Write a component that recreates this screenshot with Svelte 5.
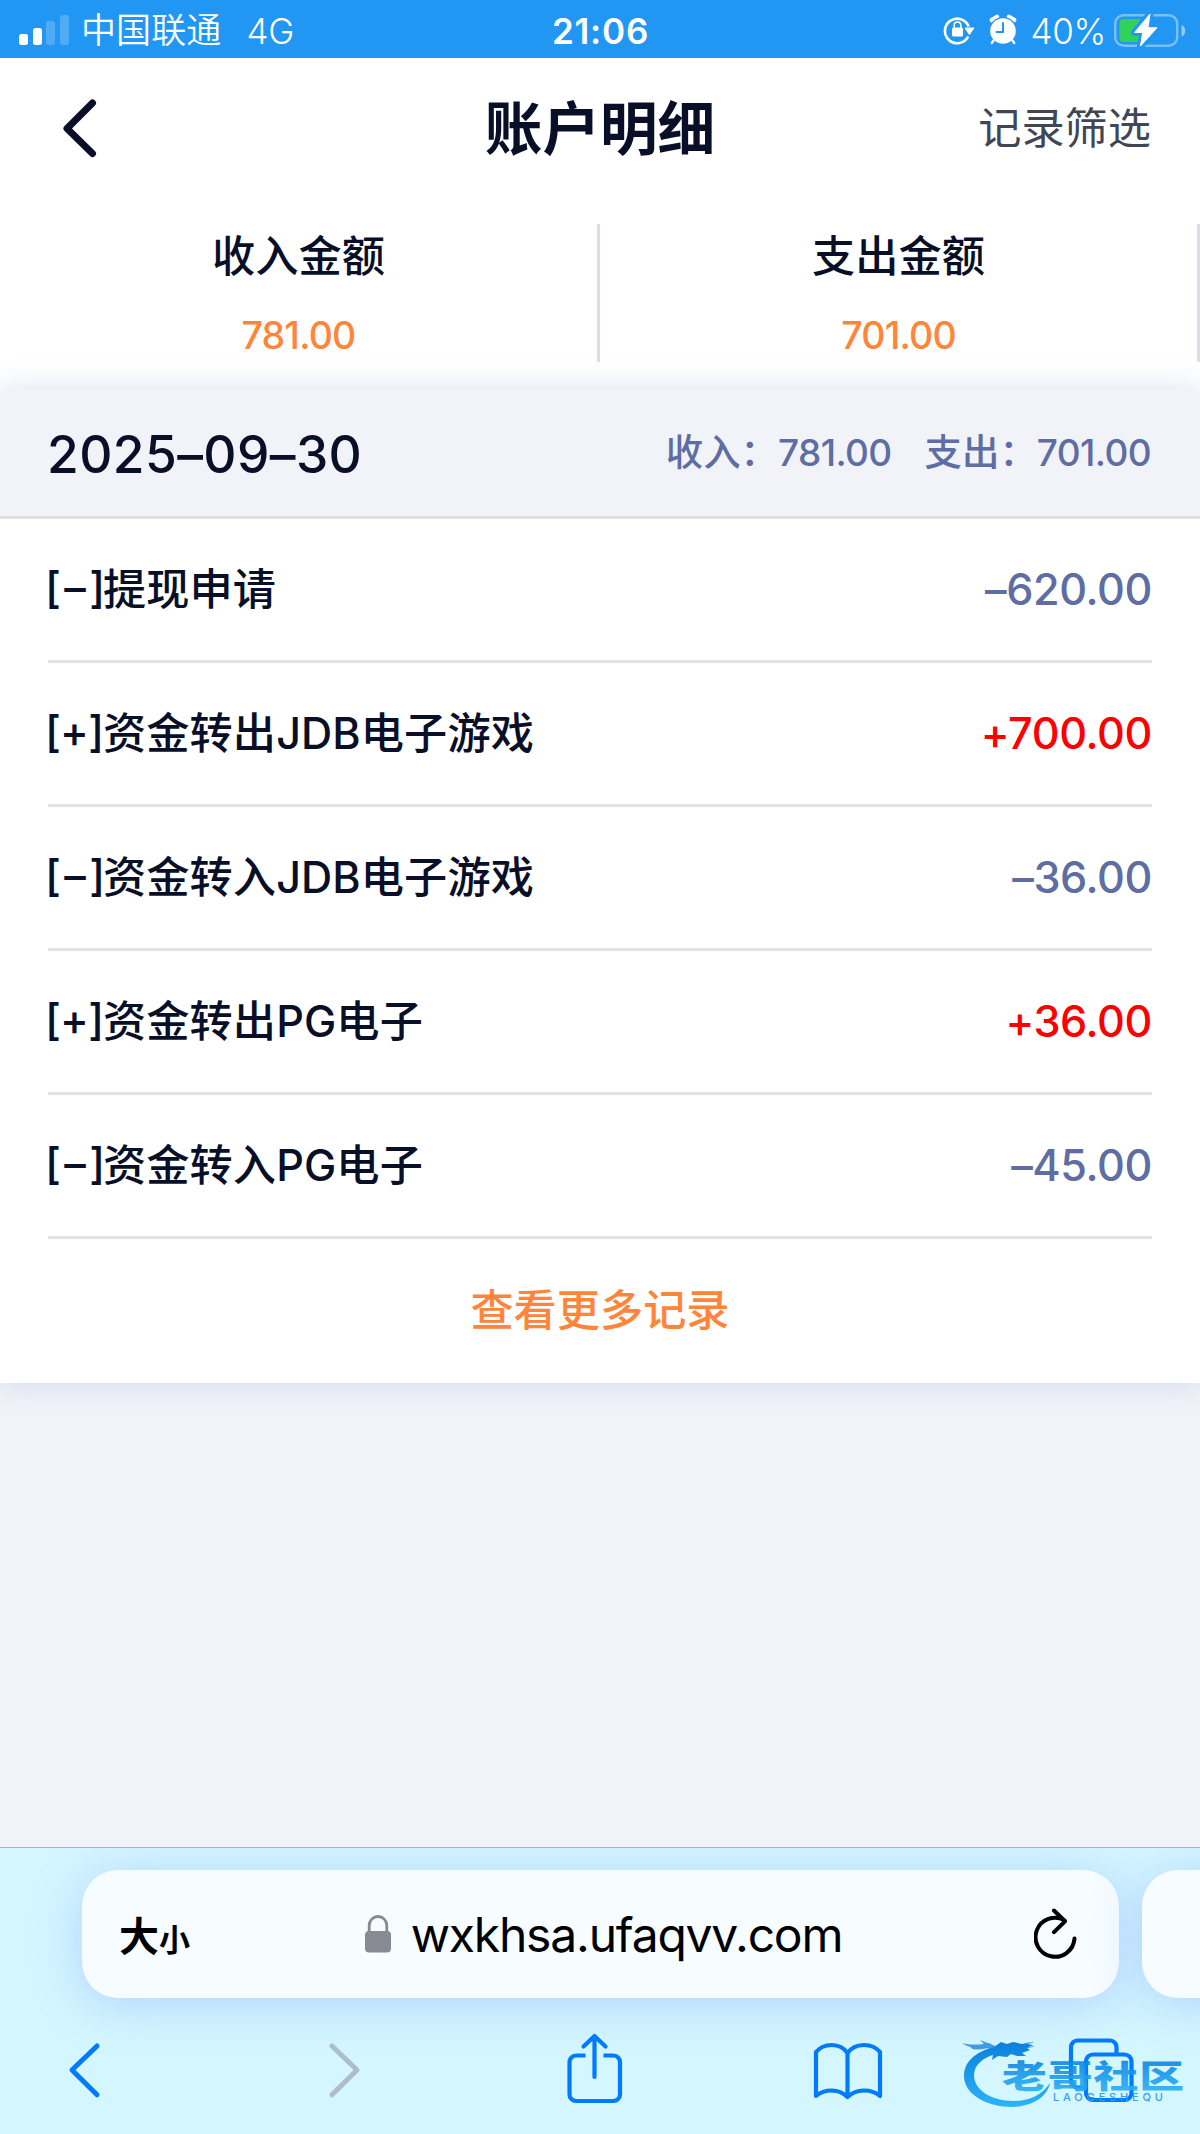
<script>
    // Totals
    let totals = [
        { label: "收入金额", value: "781.00" },
        { label: "支出金额", value: "701.00" },
    ];

    // Records
    let records = [
        { sign: "–", title: "提现申请", amount: "620.00" },
        { sign: "+", title: "资金转出JDB电子游戏", amount: "700.00" },
        { sign: "–", title: "资金转入JDB电子游戏", amount: "36.00" },
        { sign: "+", title: "资金转出PG电子", amount: "36.00" },
        { sign: "–", title: "资金转入PG电子", amount: "45.00" },
    ];
</script>

<!-- Status bar -->
<div class="status">
    <div class="side">
        <svg class="signal" width="50" height="30" viewBox="0 0 50 30">
            <rect x="0" y="19" width="9" height="11" rx="2.5" />
            <rect x="14" y="13" width="9" height="17" rx="2.5" />
            <rect class="off" x="27" y="6" width="9" height="24" rx="2.5" />
            <rect class="off" x="41" y="0" width="9" height="30" rx="2.5" />
        </svg>
        <span class="carrier">中国联通</span>
        <span class="net">4G</span>
    </div>
    <span class="time">21:06</span>
    <div class="side right">
        <svg class="rotation" width="32" height="32" viewBox="0 0 32 32">
            <path d="M25.2 22.5A12.3 12.3 0 1 1 25.7 12.5" fill="none" stroke="#fff" stroke-width="2.6" />
            <path d="M22 14h9l-4.6 6.5z" fill="#fff" stroke="#fff" stroke-linejoin="round" />
            <rect x="9" y="13.5" width="11" height="9" rx="1.5" fill="#fff" />
            <path d="M11.2 14v-2.7a3.3 3.3 0 0 1 6.6 0V14" fill="none" stroke="#fff" stroke-width="1.6" />
        </svg>
        <svg class="alarm" width="28" height="32" viewBox="0 0 28 32">
            <path d="M3 6l5-3M25 6l-5-3" stroke="#fff" stroke-width="4.6" stroke-linecap="round" />
            <circle cx="14" cy="17" r="14" fill="#2296f3" />
            <circle cx="14" cy="17" r="12.8" fill="#fff" />
            <path d="M4.4 26.6L2.8 29M23.6 26.6l1.6 2.4" stroke="#fff" stroke-width="2.4" stroke-linecap="round" />
            <path d="M14 9v9H7.5" fill="none" stroke="#2296f3" stroke-width="2" stroke-linecap="round" />
        </svg>
        <span class="percent">40%</span>
        <svg class="battery" width="72" height="36" viewBox="0 0 72 36">
            <rect x="1.2" y="3.2" width="62" height="30.5" rx="8.5" fill="none" stroke="#fff" stroke-opacity=".4" stroke-width="2.4" />
            <path d="M67.5 13c5 1.5 5 10 0 11.5z" fill="#fff" fill-opacity=".5" />
            <path d="M9 7h17.5v23H9a3.5 3.5 0 0 1-3.5-3.5v-16A3.5 3.5 0 0 1 9 7z" fill="#32d15a" />
            <path class="bolt gap" d="M36 2L20.5 20.5h8.2L26.5 34 43 15.8h-9z" />
            <path class="bolt" d="M36 2L20.5 20.5h8.2L26.5 34 43 15.8h-9z" />
        </svg>
    </div>
</div>

<!-- Header -->
<header>
    <svg class="back" width="36" height="60" viewBox="0 0 36 60">
        <path d="M31.5 5L6 30.5 31.5 55.5" />
    </svg>
    <h1>账户明细</h1>
    <span class="filter">记录筛选</span>
</header>

<section class="totals">
    {#each totals as total}
        <div class="total">
            <span class="label">{total.label}</span>
            <span class="value">{total.value}</span>
        </div>
    {/each}
</section>

<!-- Records -->
<main>
    <div class="card">
        <div class="day">
            <span class="date">2025–09–30</span>
            <div class="sums">
                <span>收入：<b>781.00</b></span>
                <span>支出：<b>701.00</b></span>
            </div>
        </div>
        <ul>
            {#each records as record}
                <li>
                    <span class="title">
                        <i class:minus={record.sign !== "+"}>[{record.sign}]</i>{record.title}
                    </span>
                    <span class="amount" class:plus={record.sign === "+"}>{record.sign}{record.amount}</span>
                </li>
            {/each}
        </ul>
        <div class="more">查看更多记录</div>
    </div>
</main>

<!-- Browser bar -->
<footer>
    <div class="tabs">
        <div class="address">
            <span class="size">大<small>小</small></span>
            <div class="host">
                <svg width="26" height="38" viewBox="0 0 26 38">
                    <rect x="0" y="16" width="26" height="21.5" rx="4" fill="#878a92" />
                    <path d="M4.2 18v-7.500a8.800 9 0 0 1 17.600 0V18" fill="none" stroke="#878a92" stroke-width="2.8" />
                </svg>
                <span>wxkhsa.ufaqvv.com</span>
            </div>
            <svg class="reload" width="44" height="54" viewBox="0 0 44 54">
                <path d="M40.5 31.5A19.5 19.5 0 1 1 30.5 13.2M20 3.5L31 14.3 20 25.2" />
            </svg>
        </div>
        <div class="address next"></div>
    </div>
    <nav>
        <svg viewBox="0 0 80 80"><path d="M53 16L28 40l25 24.8" /></svg>
        <svg class="dim" viewBox="0 0 80 80"><path d="M34 16l25 24-25 24.8" /></svg>
        <svg class="thin" viewBox="0 0 80 80">
            <path d="M33.5 25.5H24a6.500 6.500 0 0 0-6.500 6.500v32.500a6.500 6.500 0 0 0 6.500 6.500h37.500a6.500 6.500 0 0 0 6.500-6.500V32a6.500 6.500 0 0 0-6.500-6.500h-10" stroke-linecap="butt" />
            <path d="M42.5 47V6.5M31.5 16.5l11-10.500 11 10.500" />
        </svg>
        <svg class="thin" viewBox="0 0 80 80">
            <path d="M41.5 23C34 12.5 18 12.5 10 22v44c9-7.500 23-7.500 31.500 1 8.500-8.500 23.500-8.500 32.500-1V22c-8-9.500-25-9.500-32.500 1v44" />
        </svg>
        <svg class="thin" viewBox="0 0 80 80">
            <path d="M56.5 24v-7a6.500 6.500 0 0 0-6.500-6.500H17.500a6.500 6.500 0 0 0-6.500 6.500v34a6.500 6.500 0 0 0 6.500 6.500H25" />
            <rect x="26" y="24.5" width="45.5" height="45.5" rx="7" />
        </svg>
    </nav>
    <!-- Community badge, lies over the tab button -->
    <svg class="badge" width="230" height="80" viewBox="0 0 230 80">
        <defs>
            <linearGradient id="sea" x1="0" y1="0" x2="0" y2="1">
                <stop offset="0" stop-color="#0a80dc" />
                <stop offset="1" stop-color="#2bb4fa" />
            </linearGradient>
        </defs>
        <path fill="url(#sea)" d="M34 13C15 18 4 28 4 42c0 18 22 31 49 31 20-1 34-10 37-24-8 12-20 18-36 18-23 0-40-11-40-26 0-10 9-17 19-20l-1 5 6-4 9 1 4-3 6 2 9 0-4-3 8-3-3-2 6-3-6-1 4-2-9 2-9-2-6 2-6-2z" />
        <path fill="#1a86dc" fill-opacity=".8" d="M2 9c8 2 17 2 27 0l6 3c-9 3-20 5-24 2 1-1-5-2-9-5zM20 6l18 7-9 2z" />
        <path fill="none" stroke="#1a86dc" stroke-opacity=".6" d="M48 12c8 2 16 0 25-4M52 13c8 2 14 2 22-1" />
        <text class="name" transform="translate(42 54) scale(1.4 1)" textLength="130" fill="url(#sea)">老哥社区</text>
        <text class="latin" x="93" y="67" textLength="110">LAOGESHEQU</text>
    </svg>
</footer>

<style>
    :global(body) {
        background: #fff;
        font-family: Inter, "Noto Sans CJK SC", sans-serif;
        color: #0a0f28;
    }
    svg {
        display: block;
        flex: none;
    }

    /* Status bar */
    .status {
        display: grid;
        grid-template-columns: 1fr auto 1fr;
        align-items: center;
        box-sizing: border-box;
        height: 58px;
        padding: 0 14px 0 19px;
        background: #2296f3;
        color: #fff;
        line-height: 58px;
        font-size: 35px;
    }
    .side {
        display: flex;
        align-items: center;
    }
    .right {
        justify-content: flex-end;
    }
    .signal {
        fill: #fff;
    }
    .signal .off {
        fill-opacity: .2;
    }
    .carrier {
        margin-left: 12px;
        font-weight: 350;
        letter-spacing: .1px;
    }
    .net {
        margin: 2px 0 0 25px;
        font-weight: 350;
        letter-spacing: -.2px;
    }
    .time {
        margin: 1px 0 0 -4px;
        font-weight: 600;
        letter-spacing: .8px;
    }
    .alarm {
        margin-left: 14px;
    }
    .percent {
        margin: 1px 8px 0 13px;
        font-weight: 350;
        letter-spacing: -.3px;
    }
    .bolt {
        fill: #fff;
        stroke: #fff;
        stroke-width: 1;
        stroke-linejoin: round;
    }
    .gap {
        stroke: #2296f3;
        stroke-width: 7;
    }

    /* Header */
    header {
        display: grid;
        grid-template-columns: 1fr auto 1fr;
        align-items: center;
        height: 140px;
        padding: 0 49px 0 61px;
    }
    .back path {
        fill: none;
        stroke: #0a0f28;
        stroke-width: 7;
        stroke-linecap: round;
        stroke-linejoin: round;
    }
    h1 {
        margin: 2px 0 0 -12px;
        font-size: 57.6px;
        line-height: 80px;
        font-weight: 700;
    }
    .filter {
        justify-self: end;
        font-size: 43.2px;
        line-height: 60px;
        color: #414655;
    }

    /* Totals */
    .totals {
        display: grid;
        grid-template-columns: 1fr 1fr;
        height: 166px;
        padding-top: 26px;
    }
    .total {
        display: flex;
        flex-direction: column;
        align-items: center;
        box-sizing: border-box;
        height: 138px;
        border-right: 3px solid #d9dfea;
    }
    .label {
        font-size: 43.2px;
        line-height: 64px;
        font-weight: 500;
    }
    .value {
        margin-top: 16px;
        font-size: 37.5px;
        line-height: 64px;
        font-weight: 500;
        letter-spacing: -.8px;
        color: #ff853a;
    }

    /* Records */
    main {
        box-sizing: border-box;
        height: 1457px;
        background: #f2f3f9;
    }
    .card {
        background: #fff;
        box-shadow: 0 0 29px rgba(88, 112, 176, .22);
    }
    .day {
        display: flex;
        align-items: center;
        justify-content: space-between;
        box-sizing: border-box;
        height: 129px;
        padding: 0 49px 0 47px;
        border-bottom: 3px solid #e0e0e0;
        background: #f2f3f9;
    }
    .date {
        padding-top: 2px;
        font-size: 51.5px;
        font-weight: 500;
        letter-spacing: .4px;
    }
    .sums {
        display: flex;
        gap: 33px;
        padding-bottom: 6px;
        font-size: 37.4px;
        font-weight: 500;
        color: #5e6da2;
    }
    .sums b {
        font-size: 37px;
        font-weight: 500;
        letter-spacing: -.6px;
    }
    ul {
        margin: 0;
        padding: 0 48px;
        list-style: none;
    }
    li {
        display: flex;
        align-items: center;
        justify-content: space-between;
        box-sizing: border-box;
        height: 144px;
        border-bottom: 3px solid #e2e2e2;
    }
    .title {
        display: flex;
        align-items: baseline;
        padding-bottom: 8px;
        font-size: 43.2px;
        font-weight: 500;
        letter-spacing: .1px;
    }
    .title i {
        position: relative;
        top: -2px;
        width: 58px;
        margin-left: -3px;
        font-style: normal;
        font-feature-settings: "calt" 0;
        letter-spacing: -.8px;
    }
    .title .minus {
        letter-spacing: 3.4px;
    }
    .amount {
        padding-bottom: 2px;
        font-size: 43.2px;
        font-weight: 500;
        font-feature-settings: "calt" 0;
        letter-spacing: -.4px;
        color: #5e6da2;
    }
    .plus {
        color: #f00;
    }
    .more {
        height: 144px;
        line-height: 142px;
        text-align: center;
        font-size: 43.2px;
        font-weight: 500;
        color: #ff853a;
    }

    /* Browser bar */
    footer {
        position: relative;
        box-sizing: border-box;
        height: 287px;
        overflow: hidden;
        border-top: 1px solid #9fb8d2;
        background: #d4f6ff;
    }
    .tabs {
        display: flex;
        gap: 23px;
        padding: 22px 0 0 82px;
    }
    .address {
        display: flex;
        flex: none;
        align-items: center;
        justify-content: space-between;
        box-sizing: border-box;
        width: 1037px;
        height: 128px;
        padding: 0 41px 0 37px;
        border-radius: 36px;
        background: #f6fcff;
        box-shadow: 0 6px 48px rgba(135, 170, 250, .45);
        color: #000;
    }
    .size {
        font-size: 40px;
        font-weight: 700;
    }
    .size small {
        font-size: 31px;
    }
    .host {
        display: flex;
        align-items: center;
        gap: 20px;
        margin-right: 17px;
        font-size: 48px;
        letter-spacing: -1.2px;
    }
    .reload {
        fill: none;
        stroke: #000;
        stroke-width: 4;
        stroke-linecap: round;
        stroke-linejoin: round;
    }
    nav {
        display: flex;
        gap: 174px;
        padding: 32px 0 0 44px;
    }
    nav svg {
        width: 80px;
        height: 80px;
        fill: none;
        stroke: #007aff;
        stroke-width: 5;
        stroke-linecap: round;
        stroke-linejoin: round;
    }
    nav .dim {
        stroke: #adbdcb;
    }
    nav .thin {
        stroke-width: 4.2;
    }
    .badge {
        position: absolute;
        top: 186px;
        left: 960px;
    }
    .name {
        font-size: 32px;
        font-weight: 900;
        fill-opacity: .9;
    }
    .latin {
        font-size: 11px;
        font-weight: 500;
        fill: #3a9fe8;
    }
</style>
